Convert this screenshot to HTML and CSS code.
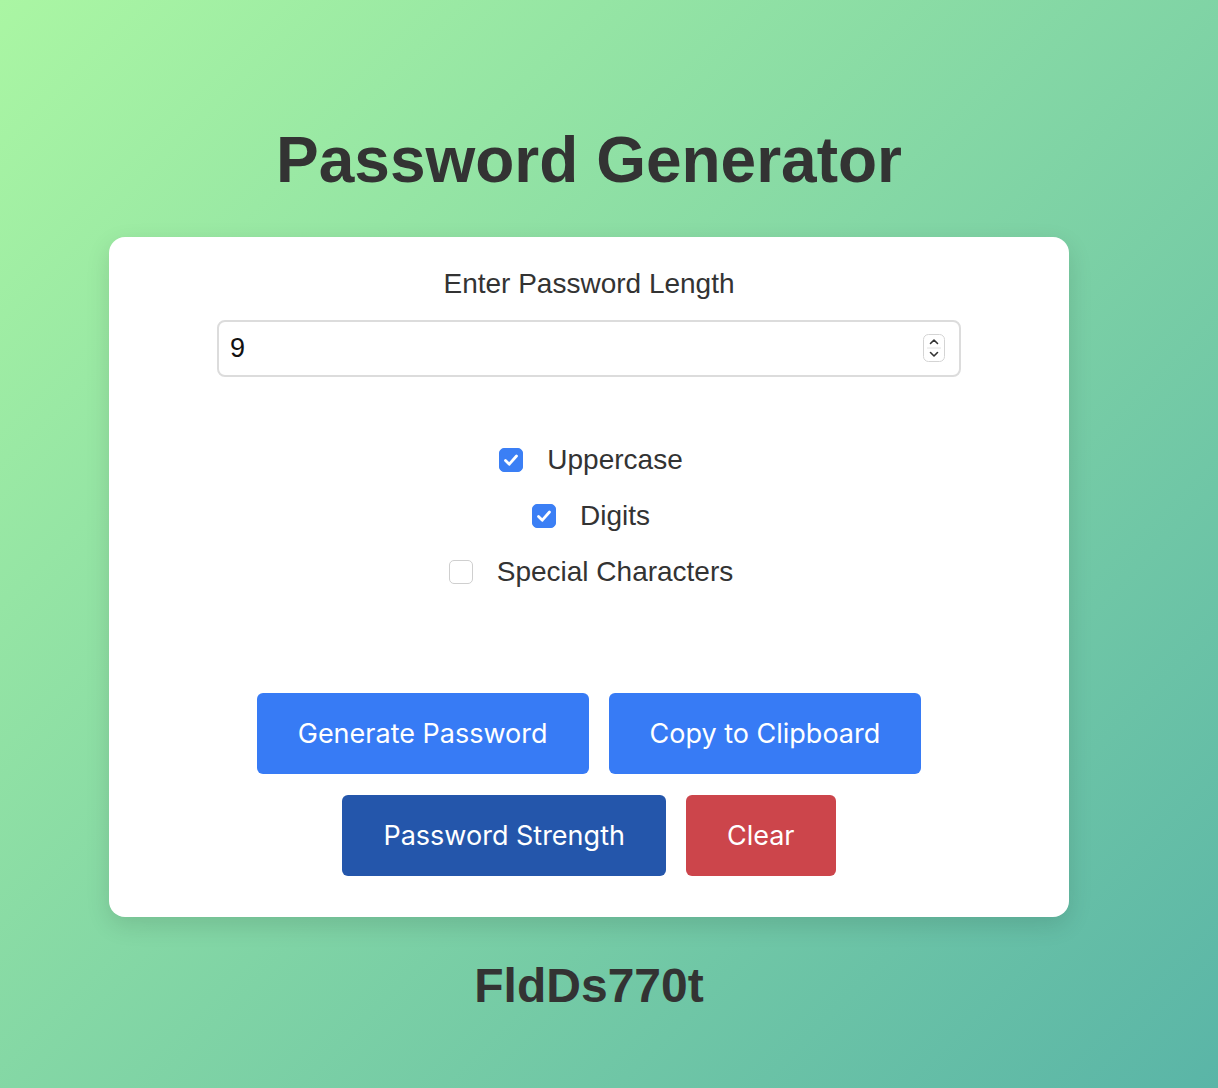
FILE: index.html
```html
<!DOCTYPE html>
<html lang="en">
<head>
<meta charset="utf-8">
<title>Password Generator</title>
<link rel="stylesheet" href="styles.css">
</head>
<body>
<main class="app">
  <h1 class="title">Password Generator</h1>
  <section class="card">
    <label class="length-label" for="len">Enter Password Length</label>
    <div class="input-wrap">
      <input id="len" class="length-input" type="number" value="9">
      <span class="spinner">
        <svg width="22" height="28" viewBox="0 0 22 28">
          <rect x="0.5" y="0.5" width="21" height="27" rx="5" fill="#fff" stroke="#d4d4d4"/>
          <line x1="4" y1="14" x2="18" y2="14" stroke="#e2e2e2"/>
          <path d="M7.5 9.5 L11 6 L14.5 9.5" fill="none" stroke="#333" stroke-width="1.6" stroke-linecap="round" stroke-linejoin="round"/>
          <path d="M7.5 18.5 L11 22 L14.5 18.5" fill="none" stroke="#333" stroke-width="1.6" stroke-linecap="round" stroke-linejoin="round"/>
        </svg>
      </span>
    </div>
    <div class="options">
      <label class="option">
        <span class="box checked"><svg width="24" height="24" viewBox="0 0 24 24"><path d="M6.5 12.5 L10.3 16.2 L17.5 8" fill="none" stroke="#fff" stroke-width="2.8" stroke-linecap="round" stroke-linejoin="round"/></svg></span>
        <span class="option-text">Uppercase</span>
      </label>
      <label class="option">
        <span class="box checked"><svg width="24" height="24" viewBox="0 0 24 24"><path d="M6.5 12.5 L10.3 16.2 L17.5 8" fill="none" stroke="#fff" stroke-width="2.8" stroke-linecap="round" stroke-linejoin="round"/></svg></span>
        <span class="option-text">Digits</span>
      </label>
      <label class="option">
        <span class="box"></span>
        <span class="option-text">Special Characters</span>
      </label>
    </div>
    <div class="actions">
      <div class="btn-row">
        <button class="btn btn-primary">Generate Password</button>
        <button class="btn btn-primary">Copy to Clipboard</button>
      </div>
      <div class="btn-row">
        <button class="btn btn-dark">Password Strength</button>
        <button class="btn btn-danger">Clear</button>
      </div>
    </div>
  </section>
  <p class="output">FldDs770t</p>
</main>
</body>
</html>
```
FILE: styles.css
```css
* { box-sizing: border-box; }
html, body { height: 100%; }
body {
  margin: 0;
  min-height: 1088px;
  background: linear-gradient(135deg, #aaf6a3 0%, #5ab5a7 100%);
  font-family: "Liberation Sans", Arial, sans-serif;
  color: #333;
  padding-right: 40px;
}
.app {
  width: 960px;
  margin: 0 auto;
  padding-top: 123px;
  display: flex;
  flex-direction: column;
  align-items: center;
}
.title {
  margin: 0 0 40px;
  font-size: 64px;
  line-height: 74px;
  font-weight: 700;
  color: #333;
  text-align: center;
}
.card {
  width: 960px;
  background: #fff;
  border-radius: 16px;
  box-shadow: 0 8px 24px rgba(0, 0, 0, 0.12);
  padding: 30px 0 41px;
  display: flex;
  flex-direction: column;
  align-items: center;
}
.length-label {
  font-size: 28px;
  line-height: 34px;
  color: #333;
}
.input-wrap {
  position: relative;
  width: 744px;
  margin-top: 19px;
}
.length-input {
  width: 100%;
  height: 57px;
  border: 2px solid #dcdcdc;
  border-radius: 8px;
  padding: 0 12px 0 11px;
  font-family: "Liberation Sans", Arial, sans-serif;
  font-size: 27px;
  color: #111;
  background: #fff;
  outline: none;
  -moz-appearance: textfield;
}
.length-input::-webkit-inner-spin-button,
.length-input::-webkit-outer-spin-button { -webkit-appearance: none; margin: 0; }
.spinner {
  position: absolute;
  right: 16px;
  top: 14px;
  display: block;
  height: 28px;
}
.options {
  margin-top: 66px;
  padding-left: 4px;
  display: flex;
  flex-direction: column;
  align-items: center;
  gap: 22px;
}
.option {
  display: flex;
  align-items: center;
  gap: 24px;
  height: 34px;
}
.box {
  width: 24px;
  height: 24px;
  border-radius: 5px;
  border: 1px solid #cfcfcf;
  background: #fff;
  display: flex;
}
.box.checked {
  background: #3b7ff5;
  border-color: #3b7ff5;
}
.box svg { margin: -1px; }
.option-text {
  font-size: 28px;
  color: #333;
}
.actions {
  margin-top: 104px;
  display: flex;
  flex-direction: column;
  align-items: center;
  gap: 21px;
}
.btn-row {
  display: flex;
  gap: 20px;
}
.btn {
  height: 81px;
  border: none;
  border-radius: 6px;
  padding: 0 41px;
  font-family: Inter, "Noto Sans", sans-serif;
  font-size: 27px;
  color: #fff;
}
.btn-primary { background: #377bf5; }
.btn-dark { background: #2456ab; }
.btn-danger { background: #cc454b; }
.output {
  margin: 41px 0 0;
  font-size: 48px;
  line-height: 56px;
  font-weight: 700;
  color: #333;
}
```
